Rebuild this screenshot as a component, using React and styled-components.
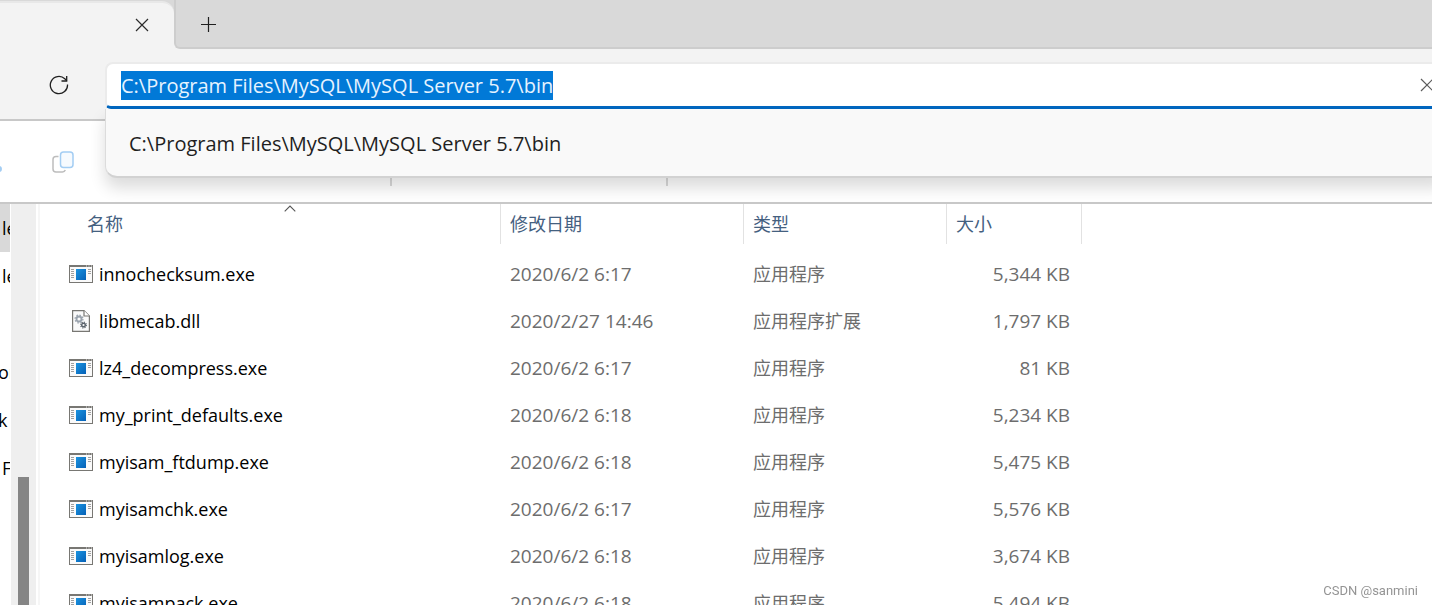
import { useEffect, useRef } from "react";
import styled, { createGlobalStyle } from "styled-components";

const PATH = "C:\\Program Files\\MySQL\\MySQL Server 5.7\\bin";

const files = [
  { name: "innochecksum.exe", date: "2020/6/2 6:17", type: "应用程序", size: "5,344 KB" },
  { name: "libmecab.dll", date: "2020/2/27 14:46", type: "应用程序扩展", size: "1,797 KB" },
  { name: "lz4_decompress.exe", date: "2020/6/2 6:17", type: "应用程序", size: "81 KB" },
  { name: "my_print_defaults.exe", date: "2020/6/2 6:18", type: "应用程序", size: "5,234 KB" },
  { name: "myisam_ftdump.exe", date: "2020/6/2 6:18", type: "应用程序", size: "5,475 KB" },
  { name: "myisamchk.exe", date: "2020/6/2 6:17", type: "应用程序", size: "5,576 KB" },
  { name: "myisamlog.exe", date: "2020/6/2 6:18", type: "应用程序", size: "3,674 KB" },
  { name: "myisampack.exe", date: "2020/6/2 6:18", type: "应用程序", size: "5,494 KB" },
];

const places = [
  { id: 1, label: "le", selected: true, indent: true },
  { id: 2, label: "le", indent: true },
  { id: 3, label: "" },
  { id: 4, label: "or" },
  { id: 5, label: "k" },
  { id: 6, label: "F", indent: true },
];

export default function App() {
  return (
    <>
      <GlobalStyle />
      <Window>
        <TabStrip>
          <TabSlot>
            <Tab>
              <IconButton aria-label="close tab">
                <CrossIcon />
              </IconButton>
            </Tab>
          </TabSlot>
          <StripRest>
            <IconButton aria-label="new tab">
              <svg width="16" height="16" viewBox="0 0 16 16">
                <path d="M8.500 1v15M1 8.500h15" stroke="#1f1f1f" strokeWidth="1.200" />
              </svg>
            </IconButton>
          </StripRest>
        </TabStrip>
        <NavBar>
          <IconButton aria-label="refresh">
            <RefreshIcon />
          </IconButton>
          <AddressBar />
        </NavBar>
        <CommandBar>
          <CutButton aria-label="cut">
            <svg width="2" height="20" viewBox="0 0 2 20">
              <circle cx="-1" cy="17" r="3" fill="#a3cdf3" />
            </svg>
          </CutButton>
          <CopyButton aria-label="copy">
            <CopyIcon />
          </CopyButton>
          <Divider />
          <Divider />
        </CommandBar>
        <Content>
          <Sidebar>
            {places.map((place) => (
              <Place key={place.id} $selected={place.selected} $indent={place.indent}>
                {place.label}
              </Place>
            ))}
          </Sidebar>
          <ScrollTrack>
            <ScrollThumb />
          </ScrollTrack>
          <FileList />
        </Content>
        <Watermark>CSDN @sanmini</Watermark>
      </Window>
    </>
  );
}

function AddressBar() {
  const inputRef = useRef(null);

  useEffect(() => {
    inputRef.current.focus();
    inputRef.current.select();
  }, []);

  return (
    <Address>
      <AddressField>
        <AddressInput
          ref={inputRef}
          aria-label="address"
          defaultValue={PATH}
          spellCheck={false}
        />
        <IconButton aria-label="clear address">
          <CrossIcon color="#5c5c5c" />
        </IconButton>
      </AddressField>
      <Suggestions>
        <Suggestion>{PATH}</Suggestion>
      </Suggestions>
    </Address>
  );
}

function FileList() {
  return (
    <ListPane>
      <Table>
        <colgroup>
          <Col $width={461} />
          <Col $width={243} />
          <Col $width={203} />
          <Col $width={135} />
        </colgroup>
        <thead>
          <tr>
            <HeadCell>
              <HeadLabel $first>
                名称
                <SortArrow width="12" height="7" viewBox="0 0 12 7">
                  <path d="M.7 6.300L6 1l5.300 5.300" fill="none" stroke="#555" strokeWidth="1.100" />
                </SortArrow>
              </HeadLabel>
            </HeadCell>
            <HeadCell>
              <HeadLabel>修改日期</HeadLabel>
            </HeadCell>
            <HeadCell>
              <HeadLabel>类型</HeadLabel>
            </HeadCell>
            <HeadCell>
              <HeadLabel>大小</HeadLabel>
            </HeadCell>
          </tr>
        </thead>
        <tbody>
          {files.map((file) => (
            <tr key={file.name}>
              <Cell>
                <FileName>
                  <IconBox>{file.name.endsWith(".dll") ? <DllIcon /> : <ExeIcon />}</IconBox>
                  {file.name}
                </FileName>
              </Cell>
              <Cell>{file.date}</Cell>
              <TypeCell>{file.type}</TypeCell>
              <SizeCell>{file.size}</SizeCell>
            </tr>
          ))}
        </tbody>
      </Table>
    </ListPane>
  );
}

function CrossIcon({ color = "#2b2b2b" }) {
  return (
    <svg width="14" height="14" viewBox="0 0 14 14">
      <path d="M1 1l12 12M13 1L1 13" stroke={color} strokeWidth="1.200" />
    </svg>
  );
}

function RefreshIcon() {
  return (
    <svg width="20" height="20" viewBox="0 0 20 20" fill="none" stroke="#1f1f1f" strokeWidth="1.300">
      <path d="M18.500 9.500A8.600 8.600 0 1 1 15.800 3.800L17.800 5.800" />
      <path d="M17.700 1v5h-5.200" />
    </svg>
  );
}

function CopyIcon() {
  return (
    <svg width="22" height="22" viewBox="0 0 22 22" fill="none" strokeWidth="1.500">
      <path
        d="M6.500 5.500H4A3 3 0 0 0 1 8.500V18a3 3 0 0 0 3 3h6.500a3 3 0 0 0 2.800-2"
        stroke="#bdbdbd"
      />
      <rect x="8.500" y="1" width="12.500" height="15.500" rx="3" stroke="#a3cdf3" fill="#f6fafe" />
    </svg>
  );
}

function ExeIcon() {
  return (
    <svg width="24" height="18" viewBox="0 0 24 18">
      <defs>
        <linearGradient id="exeBlue" x1="0" y1="0" x2="1" y2="1">
          <stop offset="0" stopColor="#1a93e0" />
          <stop offset="1" stopColor="#0560b6" />
        </linearGradient>
      </defs>
      <rect x=".5" y=".5" width="23" height="17" fill="#fafafa" stroke="#787773" />
      <path d="M0 1h24" stroke="#787773" strokeWidth="2" />
      <path d="M17 1h1M19.500 1h1M22 1h1" stroke="#e8e8e8" />
      <path
        d="M2 4.500h3M2 6.500h3M2 8.500h3M2 10.500h3M2 12.500h3M19 4.500h3M19 6.500h3M19 8.500h3"
        stroke="#a0a0a0"
      />
      <rect x="7" y="4" width="10" height="11" fill="url(#exeBlue)" />
    </svg>
  );
}

function DllIcon() {
  return (
    <svg width="18" height="22" viewBox="0 0 18 22">
      <path d="M.6.600h11.400l5.400 5.400v15.400H.6z" fill="#fafafa" stroke="#787773" strokeWidth="1.200" />
      <path d="M12 .6V6h5.400" fill="#fff" stroke="#787773" strokeWidth="1.200" />
      <g fill="none" stroke="#9aa3ad">
        <circle cx="7" cy="9" r="2.500" strokeWidth="1.800" />
        <circle cx="7" cy="9" r="3.900" strokeWidth="1.300" strokeDasharray="1.530 1.530" />
      </g>
      <g fill="none" stroke="#5c646c">
        <circle cx="11.500" cy="15" r="1.800" strokeWidth="1.400" />
        <circle cx="11.500" cy="15" r="2.900" strokeWidth="1.100" strokeDasharray="1.140 1.140" />
      </g>
    </svg>
  );
}

const GlobalStyle = createGlobalStyle`
  * {
    box-sizing: border-box;
  }

  body {
    margin: 0;
    overflow: hidden;
    background-color: white;
    font-family: "Open Sans", "Noto Sans CJK SC", sans-serif;
    font-size: 19px;
    color: black;
  }
`;

const Window = styled.div`
  display: flex;
  flex-direction: column;
  height: 100vh;
  overflow: hidden;
`;

const IconButton = styled.button`
  display: flex;
  flex: none;
  padding: 0;
  border: none;
  background: none;
`;

const TabStrip = styled.div`
  display: flex;
  flex: none;
  height: 49px;
  background-color: #f3f3f3;
`;

const TabSlot = styled.div`
  width: 174px;
  padding-top: 1px;
  background-color: #d9d9d9;
`;

const Tab = styled.div`
  display: flex;
  align-items: center;
  justify-content: flex-end;
  height: 48px;
  padding: 0 25px 3px 0;
  border-top: 2px solid #e8e8e8;
  border-top-right-radius: 12px;
  background-color: #f3f3f3;
`;

const StripRest = styled.div`
  display: flex;
  flex: 1;
  align-items: center;
  padding: 1px 0 0 24px;
  border-left: 2px solid #cdcdcd;
  border-bottom: 2px solid #cdcdcd;
  border-bottom-left-radius: 6px;
  background-color: #d9d9d9;
`;

const NavBar = styled.div`
  display: flex;
  flex: none;
  align-items: flex-start;
  gap: 36px;
  height: 72px;
  padding: 13px 0 0 49px;
  border-bottom: 2px solid #c8c8c8;
  background-color: #f3f3f3;

  > button {
    margin-top: 13px;
  }
`;

const Address = styled.div`
  position: relative;
  z-index: 1;
  flex: 1;
  margin-right: -12px;
`;

const AddressField = styled.div`
  display: flex;
  align-items: center;
  height: 47px;
  padding: 0 10px 0 14px;
  border: 2px solid #ebebeb;
  border-right: none;
  border-bottom: 3px solid #0067c0;
  border-radius: 8px 0 0 6px;
  background-color: white;
`;

const AddressInput = styled.input`
  flex: 1;
  min-width: 0;
  height: 29px;
  padding: 0;
  border: none;
  outline: none;
  background: none;
  font: inherit;
  font-size: 20px;
  line-height: 29px;

  &::selection {
    background-color: rgba(0, 120, 215, 0.996);
    color: #e6f3ff;
  }
`;

const Suggestions = styled.ul`
  position: absolute;
  top: 47px;
  left: 0;
  right: 0;
  margin: 0;
  padding: 0;
  list-style: none;
  border: 1px solid #dcdcdc;
  border-top: none;
  border-bottom: 2px solid #d2d2d2;
  border-radius: 0 0 0 12px;
  background-color: #f9f9f9;
  box-shadow: 0 10px 16px rgba(0, 0, 0, 0.14);
`;

const Suggestion = styled.li`
  padding: 2px 0 0 23px;
  font-size: 20px;
  line-height: 65px;
  color: #1f1f1f;
`;

const CommandBar = styled.div`
  display: flex;
  flex: none;
  align-items: center;
  height: 81px;
`;

const CutButton = styled(IconButton)`
  width: 2px;
`;

const CopyButton = styled(IconButton)`
  margin-left: 50px;
  margin-right: 42px;
`;

const Divider = styled.div`
  width: 2px;
  height: 48px;
  margin-left: 274px;
  background-color: #d9d9d9;
`;

const Content = styled.div`
  position: relative;
  z-index: 2;
  display: flex;
  flex: 1;
  min-height: 0;
  overflow: hidden;
  border-top: 2px solid #c8c8c8;
  background-color: white;
`;

const Sidebar = styled.nav`
  flex: none;
  width: 11px;
  padding-right: 1px;
  overflow: hidden;
`;

const Place = styled.div`
  height: 48px;
  padding-left: ${({ $indent }) => ($indent ? "2px" : "0")};
  overflow: hidden;
  font-size: 18px;
  line-height: 48px;
  text-indent: ${({ $indent }) => ($indent ? "0" : "-2px")};
  background-color: ${({ $selected }) => ($selected ? "#d9d9d9" : "white")};
`;

const ScrollTrack = styled.div`
  flex: none;
  width: 25px;
  padding: 273px 7px 0;
  background-color: #efefef;
`;

const ScrollThumb = styled.div`
  height: 100%;
  background-color: #858585;
`;

const ListPane = styled.main`
  flex: 1;
  margin-left: 2px;
  border-left: 2px solid #f6f6f6;
  overflow: hidden;
`;

const Table = styled.table`
  width: 1042px;
  table-layout: fixed;
  border-collapse: collapse;
`;

const Col = styled.col`
  width: ${({ $width }) => $width}px;
`;

const HeadCell = styled.th`
  height: 46px;
  padding: 0;
  vertical-align: top;
  font-weight: normal;
  text-align: left;
`;

const HeadLabel = styled.div`
  position: relative;
  height: 40px;
  padding-left: ${({ $first }) => ($first ? "47px" : "9px")};
  border-right: 1px solid #e2e2e2;
  font-size: 18px;
  line-height: 41px;
  color: #44607f;
`;

const SortArrow = styled.svg`
  position: absolute;
  top: 1px;
  left: 244px;
`;

const Cell = styled.td`
  height: 47px;
  padding: 0 0 0 9px;
  white-space: nowrap;
  color: #6d6d6d;
`;

const TypeCell = styled(Cell)`
  padding-bottom: 1px;
  font-size: 18px;
`;

const SizeCell = styled(Cell)`
  padding-right: 12px;
  text-align: right;
`;

const FileName = styled.div`
  display: flex;
  align-items: center;
  gap: 6px;
  padding-left: 20px;
  font-size: 18px;
  color: black;
`;

const IconBox = styled.span`
  display: flex;
  justify-content: center;
  width: 24px;
`;

const Watermark = styled.div`
  position: fixed;
  z-index: 3;
  right: 14px;
  bottom: 6px;
  font-family: Roboto, sans-serif;
  font-size: 13px;
  line-height: 16px;
  color: #949494;
`;
